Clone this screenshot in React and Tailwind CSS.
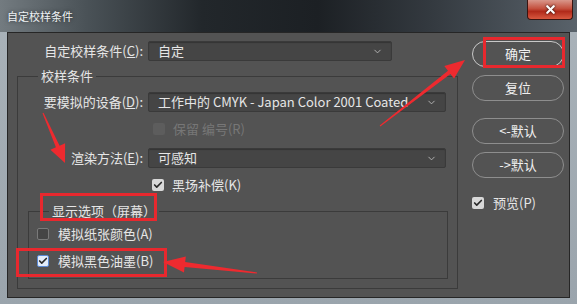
import React from "react";
import { ChevronDown, Check, X } from "lucide-react";

const font = "font-['Microsoft_YaHei','Noto_Sans_CJK_SC',sans-serif]";

const Select = ({ value, width }) => (
  <div
    className={`flex h-[20px] items-center justify-between rounded-[2px] border border-[#3a3a3a] bg-[#454545] pl-[9px] pr-[8px] text-[13px] text-[#e6e6e6] shadow-[inset_0_1px_1px_rgba(0,0,0,0.25)] ${width}`}
  >
    <span className="leading-[18px]">{value}</span>
    <ChevronDown size={11} strokeWidth={2} className="text-[#b8b8b8]" />
  </div>
);

const Box = ({ checked, disabled, focus }) => {
  if (disabled) {
    return <div className="h-[12px] w-[12px] rounded-[2px] bg-[#5d5d5d]" />;
  }
  if (!checked) {
    return (
      <div className="h-[12px] w-[12px] rounded-[2px] border border-[#7a7a7a] bg-[#454545]" />
    );
  }
  return (
    <div
      className={`flex h-[12px] w-[12px] items-center justify-center rounded-[2px] ${
        focus ? "border border-[#5a8ad6] bg-[#e3ecfa]" : "bg-[#d9d9d9]"
      }`}
    >
      <Check size={10} strokeWidth={4} className="text-[#2a2a2a]" />
    </div>
  );
};

const CheckRow = ({ label, checked, disabled, focus, gap = "gap-[8px]" }) => (
  <div className={`flex h-[20px] items-center ${gap}`}>
    <Box checked={checked} disabled={disabled} focus={focus} />
    <span
      className={`text-[13px] leading-[16px] ${
        disabled ? "text-[#777777]" : "text-[#e6e6e6]"
      }`}
    >
      {label}
    </span>
  </div>
);

const Button = ({ children, strong }) => (
  <div
    className={`flex h-[26px] w-[92px] items-center justify-center rounded-full border text-[13px] text-[#f0f0f0] ${
      strong ? "border-[#c8c8c8]" : "border-[#8e8e8e]"
    }`}
  >
    {children}
  </div>
);

const Arrows = () => (
  <svg
    className="pointer-events-none absolute left-0 top-0"
    width="577"
    height="304"
    viewBox="0 0 577 304"
  >
    <g fill="none" stroke="#e8282e" strokeWidth="3">
      <rect x="484.5" y="38.5" width="79" height="28" />
      <rect x="41.5" y="194.5" width="114" height="25" />
      <rect x="17.5" y="249.5" width="148" height="26" />
    </g>
    <g fill="#ee2a2f">
      <polygon points="380.3,126.4 450.4,73.9 454.1,78.6 465,60 444.3,66 448,70.7 379.7,125.6" />
      <polygon points="43.5,112.8 59.6,145.7 65.1,143.3 65,163 50.4,149.7 55.9,147.3 42.5,113.2" />
      <polygon points="257.1,272.4 185.2,262.1 185.8,256.6 163,262 184,272.5 184.6,267.1 256.9,273.6" />
    </g>
  </svg>
);

export default function App() {
  return (
    <div
      className={`relative flex h-[304px] w-[577px] flex-col overflow-hidden bg-[linear-gradient(180deg,#aab3ba_0%,#9aa4ac_100%)] ${font}`}
    >
      {/* title bar */}
      <div className="flex h-[32px] items-start justify-between bg-[linear-gradient(90deg,#737b80_0%,#4a5257_15%,#22272b_35%,#1c2024_55%,#343a40_75%,#59626a_100%)] pl-[7px] pr-[4px]">
        <span className="mt-[8px] text-[11px] leading-[16px] text-[#eef2f4] [text-shadow:0_0_4px_rgba(0,0,0,0.6)]">
          自定校样条件
        </span>
        <div className="flex h-[20px] w-[46px] items-center justify-center rounded-b-[4px] border border-t-0 border-[#3a1410] bg-[linear-gradient(180deg,#d9978b_0%,#c4503e_45%,#b12a1a_60%,#d8583f_100%)]">
          <X
            size={13}
            strokeWidth={4}
            className="text-white drop-shadow-[0_0_1px_rgba(0,0,0,0.9)]"
          />
        </div>
      </div>

      {/* client area */}
      <div className="mx-[7px] mb-[6px] flex flex-1 border border-[#262626] bg-[#535353] pl-[9px] pt-[8px]">
        <div className="flex w-[441px] flex-col">
          <div className="flex items-center gap-[5px]">
            <span className="w-[126px] text-right text-[13px] text-[#e6e6e6]">
              自定校样条件(<u>C</u>):
            </span>
            <Select value="自定" width="w-[244px]" />
          </div>

          <fieldset className="mt-[7px] w-[441px] border border-[#3b3b3b] pb-[9px]">
            <legend className="ml-[20px] px-[3px] text-[13px] leading-[16px] text-[#e6e6e6]">
              校样条件
            </legend>
            <div className="flex flex-col pt-[8px]">
              <div className="flex items-center gap-[5px]">
                <span className="w-[125px] text-right text-[13px] text-[#e6e6e6]">
                  要模拟的设备(<u>D</u>):
                </span>
                <Select
                  value="工作中的 CMYK - Japan Color 2001 Coated"
                  width="w-[298px]"
                />
              </div>
              <div className="mt-[7px] pl-[135px]">
                <CheckRow label="保留 编号(R)" disabled />
              </div>
              <div className="mt-[9px] flex items-center gap-[5px]">
                <span className="w-[125px] text-right text-[13px] text-[#e6e6e6]">
                  渲染方法(<u>E</u>):
                </span>
                <Select value="可感知" width="w-[298px]" />
              </div>
              <div className="mt-[7px] pl-[134px]">
                <CheckRow label="黑场补偿(K)" checked />
              </div>

              <fieldset className="ml-[10px] mt-[8px] w-[420px] border border-[#3b3b3b] pb-[7px]">
                <legend className="ml-[20px] px-[3px] text-[13px] leading-[16px] text-[#e6e6e6]">
                  显示选项（屏幕）
                </legend>
                <div className="flex flex-col pl-[8px] pt-[5px]">
                  <CheckRow label="模拟纸张颜色(A)" gap="gap-[9px]" />
                  <div className="mt-[7px]">
                    <CheckRow label="模拟黑色油墨(B)" checked focus gap="gap-[9px]" />
                  </div>
                </div>
              </fieldset>
            </div>
          </fieldset>
        </div>

        <div className="ml-[14px] flex flex-col">
          <Button strong>确定</Button>
          <div className="mt-[8px]">
            <Button>复位</Button>
          </div>
          <div className="mt-[17px]">
            <Button>&lt;-默认</Button>
          </div>
          <div className="mt-[8px]">
            <Button>-&gt;默认</Button>
          </div>
          <div className="mt-[15px]">
            <CheckRow label="预览(P)" checked gap="gap-[9px]" />
          </div>
        </div>
      </div>

      <Arrows />
    </div>
  );
}
